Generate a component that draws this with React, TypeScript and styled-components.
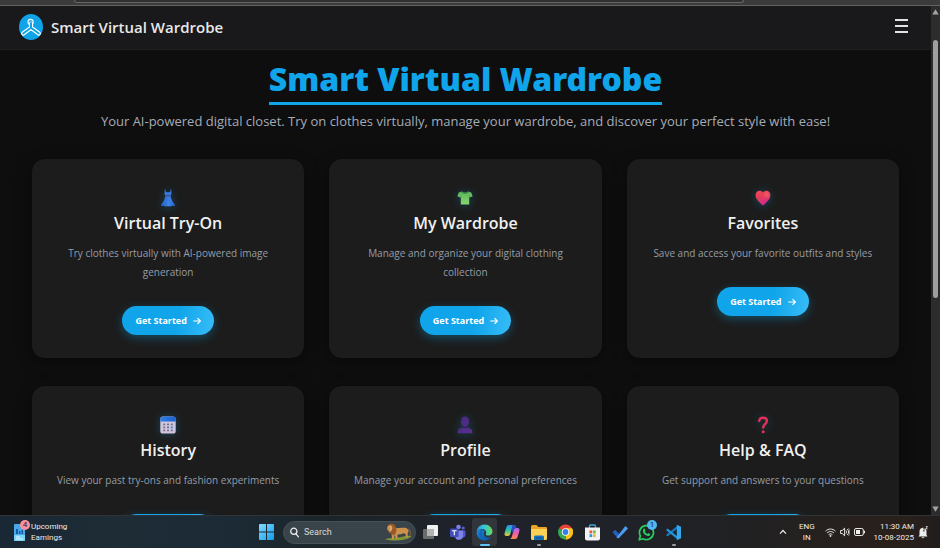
import React from "react";
import styled, { createGlobalStyle } from "styled-components";

const GlobalStyle = createGlobalStyle`
  *, *::before, *::after { box-sizing: border-box; }
  body { margin: 0; background: #0e0e0e; color: #eaeaea; font-family: "Open Sans", "Noto Sans", sans-serif; }
  h1, h2, p { margin: 0; }
  button { border: 0; padding: 0; background: none; color: inherit; font: inherit; cursor: pointer; }
  svg { display: block; flex: none; }
`;

const Desktop = styled.div`
  display: flex;
  flex-direction: column;
  height: 100vh;
  overflow: hidden;
`;

const BrowserEdge = styled.div`
  flex: none;
  height: 6px;
  padding: 0 196px 0 74px;
  background: #3b3b3b;
  border-bottom: 1px solid #626262;
`;

const AddressBarEdge = styled.div`
  height: 3px;
  background: #303030;
  border: 1px solid #666;
  border-top: 0;
  border-radius: 0 0 6px 6px;
`;

const Viewport = styled.div`
  flex: 1;
  min-height: 0;
  display: flex;
`;

const Page = styled.div`
  flex: 1;
  min-width: 0;
  overflow: hidden;
`;

const Header = styled.header`
  display: flex;
  align-items: center;
  justify-content: space-between;
  height: 44px;
  padding: 0 22px 2px 19px;
  background: #19191b;
  border-bottom: 1px solid #1f1f20;
`;

const Brand = styled.a`
  display: flex;
  align-items: center;
  gap: 8px;
  color: #e8e8e8;
  font-size: 15px;
  line-height: 24px;
  font-weight: 600;
  text-decoration: none;
`;

const MenuButton = styled.button`
  display: flex;
  padding-bottom: 3px;
`;

const Main = styled.main`
  padding: 9px 32px 32px;
`;

const Hero = styled.section`
  display: flex;
  flex-direction: column;
  align-items: center;
  text-align: center;
`;

const Title = styled.h1`
  padding-bottom: 3px;
  border-bottom: 3px solid #10a5ea;
  color: #10a5ea;
  font-family: "Noto Sans", "Open Sans", sans-serif;
  font-size: 32px;
  line-height: 40px;
  font-weight: 900;
`;

const Subtitle = styled.p`
  margin-top: 6px;
  color: #a5acb8;
  font-size: 13px;
  line-height: 20px;
  font-weight: 500;
`;

const CardGrid = styled.section`
  display: grid;
  grid-template-columns: repeat(3, minmax(0, 1fr));
  gap: 28px 25px;
  margin-top: 28px;
`;

const Card = styled.article`
  display: flex;
  flex-direction: column;
  align-items: center;
  padding: 27px 24px 23px;
  border-radius: 13px;
  background: #1c1c1c;
  box-shadow: 0 4px 16px rgba(0, 0, 0, 0.4);
  text-align: center;
`;

const CardIcon = styled.div`
  display: flex;
  align-items: center;
  height: 24px;
  filter: drop-shadow(0 1px 4px rgba(14, 165, 233, 0.3));
`;

const CardTitle = styled.h2`
  color: #f0f0f0;
  font-size: 16px;
  line-height: 26px;
  font-weight: 600;
`;

const CardText = styled.p`
  margin-top: 8px;
  color: #959ca8;
  font-size: 10px;
  line-height: 19px;
`;

const StartButton = styled.button`
  display: flex;
  align-items: center;
  gap: 6px;
  height: 29px;
  margin-top: 24px;
  padding: 0 13px;
  border-radius: 15px;
  background: linear-gradient(100deg, #10a5ea 60%, #38bdf8);
  box-shadow: 0 3px 10px rgba(14, 165, 233, 0.35);
  color: #fff;
  font-size: 9px;
  font-weight: 700;
`;

const ScrollTrack = styled.div`
  flex: none;
  display: flex;
  flex-direction: column;
  align-items: center;
  justify-content: space-between;
  width: 9px;
  padding: 3px 0;
  background: #2c2c2c;
`;

const ScrollLane = styled.div`
  flex: 1;
  padding: 25px 0 5px;
`;

const ScrollThumb = styled.div`
  width: 5px;
  height: 56%;
  border-radius: 3px;
  background: #9f9f9f;
`;

const Taskbar = styled.footer`
  flex: none;
  display: grid;
  grid-template-columns: 1fr auto 1fr;
  align-items: center;
  height: 33px;
  border-top: 1px solid #303335;
  background: linear-gradient(90deg, #1a2734 0%, #1d2c35 12%, #1c2a35 25%, #1b2529 35%, #20222a 50%, #20222a 64%, #202123 78%, #2a201b 96%, #211d1c 100%);
  color: #ececec;
  font-family: Roboto, "Open Sans", sans-serif;
  font-size: 8px;
  line-height: 11px;
`;

const WidgetButton = styled.button`
  justify-self: start;
  display: flex;
  align-items: center;
  gap: 5px;
  padding-left: 13px;
  text-align: left;
`;

const WidgetIcon = styled.span`
  position: relative;
`;

const Badge = styled.span<{ $tone: "pink" | "blue" }>`
  position: absolute;
  top: ${(p) => (p.$tone === "pink" ? "-4px" : "2px")};
  right: ${(p) => (p.$tone === "pink" ? "-4px" : "2px")};
  width: 10px;
  height: 10px;
  border-radius: 50%;
  background: ${(p) => (p.$tone === "pink" ? "#ff8f9d" : "#4fb8f0")};
  color: #17202a;
  font-size: 8px;
  line-height: 10px;
  text-align: center;
`;

const Apps = styled.nav`
  display: flex;
  align-items: center;
  padding-left: 6px;
`;

const SearchBox = styled.label`
  display: flex;
  align-items: center;
  width: 133px;
  height: 23px;
  margin: 0 1px 0 9px;
  padding: 0 3px 0 6px;
  border: 1px solid #465057;
  border-radius: 12px;
  background: #39444a;
`;

const SearchInput = styled.input`
  flex: 1;
  min-width: 0;
  padding: 0 0 0 5px;
  border: 0;
  outline: 0;
  background: none;
  color: #eee;
  font: inherit;
  font-size: 9px;
  &::placeholder { color: #d8dcde; opacity: 1; }
`;

const AppButton = styled.button<{ $state?: "active" | "running" }>`
  position: relative;
  display: flex;
  align-items: center;
  justify-content: center;
  width: 27px;
  height: 28px;
  border-radius: 4px;
  background: ${(p) => (p.$state === "active" ? "#32353a" : "transparent")};
  background-clip: padding-box;
  border: solid transparent;
  border-width: 0 1px;

  &::after {
    content: "";
    position: absolute;
    bottom: 0;
    width: ${(p) => (p.$state === "active" ? "10px" : "4px")};
    height: 2px;
    border-radius: 1px;
    background: ${(p) => (p.$state === "active" ? "#5fc6f5" : p.$state === "running" ? "#9a9ca0" : "transparent")};
  }
`;

const Tray = styled.div`
  justify-self: end;
  display: flex;
  align-items: center;
  padding-right: 12px;
`;

const Language = styled.button`
  margin: 0 10px 0 12px;
  text-align: center;
`;

const Status = styled.button`
  display: flex;
  align-items: center;
  gap: 4px;
`;

const Clock = styled.time`
  margin: 0 4px 0 9px;
  text-align: right;
`;

/* ---- Card icons ---- */

const DressIcon = () => (
  <svg width="16" height="18" viewBox="0 0 16 18" aria-hidden="true">
    <defs>
      <linearGradient id="dress" x1="0" x2="1"><stop stopColor="#245fc4" /><stop offset=".55" stopColor="#3f88ee" /><stop offset="1" stopColor="#2863c9" /></linearGradient>
    </defs>
    <path d="M4.700.5v2.300L4.400 5l1.200 2h4.800l1.200-2-.3-2.200V.500h-.9v2L8 3.500 5.600 2.500v-2z" fill="#3678e0" />
    <path d="M5.500 6.800h5c.6 3.600 2.300 6.400 4.800 9.400l-1.600.8-1.400-.4-1.500.9-1.400-.6-1.400.6-1.400-.6-1.400.6-1.400-.9-1.400.4-1.700-.8c2.500-3 4.200-5.800 4.800-9.400z" fill="url(#dress)" />
    <path d="M5.400 6.200h5.200v1.100H5.400z" fill="#4a3f73" />
    <path d="M6.800 8l-1.500 8M8 8v8M9.200 8l1.500 8" stroke="#1f56b5" strokeWidth=".5" opacity=".5" />
  </svg>
);

const ShirtIcon = () => (
  <svg width="16" height="16" viewBox="0 0 16 16" aria-hidden="true">
    <defs><linearGradient id="shirt" x1="0" y1="0" x2="0" y2="1"><stop stopColor="#5cb75a" /><stop offset="1" stopColor="#86d672" /></linearGradient></defs>
    <path d="M5 1.500L1.800 2.600.4 6.200l2.900 1.300.5-.7v7.700h8.400V6.800l.5.7 2.900-1.300-1.400-3.600L11 1.500c-.8 1.600-5.200 1.600-6 0z" fill="url(#shirt)" />
    <path d="M5 1.500c.8 1.800 5.200 1.800 6 0l.9.300c-1 3-6.800 3-7.800 0z" fill="#3c9350" />
    <path d="M3.800 6.800V4.900M12.200 6.800V4.900" stroke="#3d9a4d" strokeWidth=".6" />
  </svg>
);

const HeartIcon = () => (
  <svg width="16" height="16" viewBox="0 0 16 16" aria-hidden="true">
    <defs>
      <linearGradient id="heart" x1=".2" y1="0" x2=".6" y2="1"><stop stopColor="#ef4757" /><stop offset=".5" stopColor="#e13a5a" /><stop offset="1" stopColor="#c9289e" /></linearGradient>
      <radialGradient id="heartGlow" cx=".76" cy=".28" r=".3"><stop stopColor="#f26a66" stopOpacity=".7" /><stop offset="1" stopColor="#f26a66" stopOpacity="0" /></radialGradient>
    </defs>
    <path d="M8 2.600C6.600.2 3.300.200 1.700 2 .1 3.900.3 6.800 1.700 8.900c1.600 2.500 3.900 4.200 5.500 6.100.5.500 1.100.5 1.600 0 1.600-1.900 3.900-3.600 5.500-6.100 1.400-2.100 1.600-5 0-6.900C12.700.2 9.400.200 8 2.600z" fill="url(#heart)" />
    <path d="M8 2.600C6.600.2 3.300.200 1.700 2 .1 3.900.3 6.800 1.700 8.900c1.600 2.500 3.900 4.200 5.500 6.100.5.500 1.100.5 1.600 0 1.600-1.900 3.900-3.600 5.500-6.100 1.400-2.100 1.600-5 0-6.900C12.700.2 9.400.200 8 2.600z" fill="url(#heartGlow)" />
  </svg>
);

const CalendarIcon = () => (
  <svg width="16" height="18" viewBox="0 0 16 18" aria-hidden="true">
    <defs><linearGradient id="cal" x1="0" x2="1"><stop stopColor="#2f7fe6" /><stop offset="1" stopColor="#1d5fd0" /></linearGradient></defs>
    <rect x=".3" y=".5" width="15.400" height="17" rx="2.600" fill="#cfc6dd" />
    <path d="M.3 5.500V3.100A2.600 2.600 0 0 1 2.900.5h10.200a2.600 2.600 0 0 1 2.600 2.600v2.400z" fill="url(#cal)" />
    {[7.5, 10.5, 13.5].map((y, row) =>
      [3.2, 7, 10.8].map((x, col) => (
        <rect key={`${x}-${y}`} x={x} y={y} width="2" height="1.800" rx=".4" fill={row === 1 && col === 2 ? "#1f8be8" : "#77708c"} />
      )),
    )}
  </svg>
);

const PersonIcon = () => (
  <svg width="16" height="18" viewBox="0 0 16 18" aria-hidden="true">
    <defs><linearGradient id="person" x1="0" y1="0" x2="1" y2="1"><stop stopColor="#45297a" /><stop offset="1" stopColor="#5a2f93" /></linearGradient></defs>
    <path d="M8 .5c-2.500 0-4 1.900-4 4.700 0 2 .8 3.800 2 4.800v1.600l-3.400 1.200C1.200 13.300.6 14.400.5 17.300h15c-.1-2.900-.7-4-2.100-4.500L10 11.600V10c1.200-1 2-2.800 2-4.800C12 2.400 10.500.5 8 .5z" fill="url(#person)" />
    <path d="M6 10c1.200 1 2.800 1 4 0v1.600c-1 1-3 1-4 0z" fill="#321d5e" />
  </svg>
);

const QuestionIcon = () => (
  <svg width="12" height="18" viewBox="0 0 12 18" aria-hidden="true">
    <defs><linearGradient id="question" x1="0" y1="0" x2="0" y2="1"><stop stopColor="#e8356b" /><stop offset="1" stopColor="#e6323f" /></linearGradient></defs>
    <path d="M2.200 4.900C2.500 2.700 4 1.700 6 1.700c2.300 0 3.900 1.200 3.900 3.200C9.900 8 6.200 8 6.200 11.600" fill="none" stroke="#dd3158" strokeWidth="2.500" strokeLinecap="round" />
    <circle cx="6.200" cy="15.700" r="1.500" fill="url(#question)" />
  </svg>
);

const ArrowIcon = () => (
  <svg width="8" height="8" viewBox="0 0 8 8" fill="none" stroke="#fff" strokeWidth="1.200" aria-hidden="true">
    <path d="M.3 4h7M4.500 1.200L7.300 4 4.500 6.800" />
  </svg>
);

const BrandLogo = () => (
  <svg width="24" height="26" viewBox="0 0 24 26" aria-hidden="true">
    <ellipse cx="12" cy="13" rx="12" ry="13" fill="#0fa4e9" />
    <g fill="none" strokeLinecap="round" strokeLinejoin="round">
      <path d="M12 13.800L4.200 19.500M12 13.800l7.800 5.700M12 13.800v-4.100" stroke="#fff" strokeWidth="4.200" />
      <circle cx="11.600" cy="8" r="2.600" stroke="#fff" strokeWidth="1.100" />
      <path d="M12 13.700L4.200 19.500M12 13.700l7.800 5.800M12 13.800V9" stroke="#0fa4e9" strokeWidth="2" />
    </g>
  </svg>
);

/* ---- Taskbar icons ---- */

const NewsIcon = () => (
  <svg width="13" height="17" viewBox="0 0 13 17" aria-hidden="true">
    <rect x="1" width="11" height="17" rx="1" fill="#48a7e8" />
    <path d="M1 11h11v5a1 1 0 0 1-1 1H2a1 1 0 0 1-1-1z" fill="#79d4fa" />
    <path d="M3 10V5h2v5zm3 0V7h1.500v3zm2.500 0V6H10v4z" fill="#155ba4" />
    <path d="M3 13h4M3 15h7" stroke="#e9f9ff" />
  </svg>
);

const WindowsIcon = () => (
  <svg width="15" height="16" viewBox="0 0 15 16" aria-hidden="true">
    <defs><linearGradient id="win" x1="0" y1="0" x2="1" y2="1"><stop stopColor="#83dcff" /><stop offset="1" stopColor="#119cee" /></linearGradient></defs>
    <path d="M0 1a1 1 0 0 1 1-1h6v7.600H0zM8 0h6a1 1 0 0 1 1 1v6.600H8zM0 8.400h7V16H1a1 1 0 0 1-1-1zM8 8.400h7V15a1 1 0 0 1-1 1H8z" fill="url(#win)" />
  </svg>
);

const SearchIcon = () => (
  <svg width="9" height="11" viewBox="0 0 9 11" fill="none" stroke="#e9ecee" strokeWidth="1.300" aria-hidden="true">
    <circle cx="3.800" cy="4.300" r="3.100" /><path d="M6 6.800l2.500 3" strokeLinecap="round" />
  </svg>
);

const LionIcon = () => (
  <svg width="27" height="18" viewBox="0 0 27 18" aria-hidden="true">
    <path d="M0 16c6-1.300 12-1 17-2.200 3-.8 6-1.200 9.500-.8-1.500 2.200-6 3.800-11.500 4.300-5 .4-12 .3-15-1.300z" fill="#7c9636" />
    <path d="M9 4.800c3.500.6 7-.6 11 0 2.500.4 3.700 2 3.500 4.200l-.9 1.600.4 4h-1.800l-.7-3.600-2-.8c-2 1-4 1.300-6 1.200l.2 4.600h-1.900l-1-4.500-1 4.800H7L6.500 10z" fill="#cc914c" />
    <path d="M23 6c2.500 1 2.700 3.500 2 6.500" fill="none" stroke="#a8672c" strokeWidth=".9" />
    <path d="M3 2.200C4.500.2 8 .2 9.800 2c1.800 2 2 5 1.200 7.600-.6 2-2.600 3-4 1.900C5.500 10.300 3.500 9.800 2.800 7.800 2 6 2 3.800 3 2.200z" fill="#98592a" />
    <path d="M2.800 3.600c1.200-1.600 3.700-1.500 4.400.2.600 1.600-.2 3.700-1.600 4.800C4.300 8.800 2.700 8 2.300 6.600z" fill="#dfaa63" />
    <circle cx="4.100" cy="4.900" r=".5" fill="#3a1e0c" /><path d="M2.600 7l1.500.4" stroke="#4a2812" strokeWidth=".8" />
  </svg>
);

const TaskViewIcon = () => (
  <svg width="15" height="16" viewBox="0 0 15 16" aria-hidden="true">
    <rect x="4" y="1" width="11" height="11" rx="1" fill="#f1f1f1" /><rect y="5" width="11" height="10" rx="1" fill="#6b6c6e" />
    <path d="M4 5h7v7H4z" fill="#b3b3b4" />
  </svg>
);

const TeamsIcon = () => (
  <svg width="16" height="16" viewBox="0 0 16 16" aria-hidden="true">
    <circle cx="8.500" cy="3" r="2.300" fill="#7b83eb" /><circle cx="13.200" cy="4" r="1.600" fill="#5560ce" />
    <path d="M11 6.500h4.500V11c0 2-2 3-4 2z" fill="#5059c9" /><path d="M5 6.500h8V11a4 4 0 0 1-8 1.500z" fill="#7b83eb" />
    <rect y="4.500" width="8.500" height="8.500" rx="1" fill="#434cbd" />
    <path d="M2 6.800h4.600M4.300 6.800v4.500" stroke="#fff" strokeWidth="1.100" />
  </svg>
);

const EdgeIcon = () => (
  <svg width="17" height="17" viewBox="0 0 17 17" aria-hidden="true">
    <defs>
      <linearGradient id="edgeTop" x1="0" x2="1"><stop stopColor="#249fe4" /><stop offset=".5" stopColor="#36c9d2" /><stop offset="1" stopColor="#67d84f" /></linearGradient>
      <linearGradient id="edgeSide" x1="0" y1="0" x2="1" y2="1"><stop stopColor="#1a8ae0" /><stop offset="1" stopColor="#0c4f97" /></linearGradient>
    </defs>
    <path d="M.5 8.500a8 8 0 0 0 14.600 4.600c-3.600 1.600-7.100-.1-7.300-3.100-.1-1.200.4-2 1-2.800C6 4 1.500 5.500.5 8.500z" fill="url(#edgeSide)" />
    <path d="M.5 8.500A8 8 0 0 1 8.500.5c4.600 0 8 3.400 8 7 0 2.600-2 4-4.200 4-1.800 0-3-.7-2.400-1.500 1-1.600-.1-4.500-3.200-4.900C3.800 4.700 1.200 6 .5 8.500z" fill="url(#edgeTop)" />
    <path d="M3.300 9.200c.3-2 1.500-3.700 3.600-4.100-2.100 2.700-1.700 8.600 3 9.900-3.500 1-7-2-6.600-5.800z" fill="#1565b6" />
  </svg>
);

const CopilotIcon = () => (
  <svg width="16" height="16" viewBox="0 0 16 16" aria-hidden="true">
    <defs>
      <linearGradient id="copL" x1="0" y1="0" x2="0" y2="1"><stop stopColor="#2c8df5" /><stop offset=".5" stopColor="#32c3a0" /><stop offset="1" stopColor="#f2c63a" /></linearGradient>
      <linearGradient id="copR" x1="0" y1="0" x2="0" y2="1"><stop stopColor="#a76bf2" /><stop offset=".5" stopColor="#ef5fa8" /><stop offset="1" stopColor="#fb8b4b" /></linearGradient>
    </defs>
    <path d="M5 1h5.500c-1.700 0-2 1.400-2.500 3L6.500 9.500c-.5 1.800-1 2.500-2.800 2.500H2.500C.6 12 .2 10.500.7 8.700L2.300 3.500C2.800 1.800 3.500 1 5 1z" fill="url(#copL)" />
    <path d="M11 15H5.500c1.700 0 2-1.400 2.500-3l1.500-5.500C10 4.700 10.500 4 12.300 4h1.200c1.900 0 2.300 1.500 1.800 3.300l-1.600 5.200c-.5 1.700-1.200 2.500-2.700 2.500z" fill="url(#copR)" />
    <path d="M8.500 1h2c1.200 0 1.600 1 2 3-2 0-2.500.7-3 2.500L9 8.200 7.200 7 8 4z" fill="#274fc4" />
  </svg>
);

const FolderIcon = () => (
  <svg width="16" height="15" viewBox="0 0 16 15" aria-hidden="true">
    <path d="M0 1.500A1.500 1.500 0 0 1 1.500 0h4L7.300 2H15a1 1 0 0 1 1 1v3H0z" fill="#e8a524" />
    <path d="M0 4h16v9.500A1.500 1.500 0 0 1 14.500 15h-13A1.500 1.500 0 0 1 0 13.500z" fill="#fdd155" />
    <path d="M3 15v-3a1.500 1.500 0 0 1 1.500-1.500h7A1.500 1.500 0 0 1 13 12v3z" fill="#1671bb" /><path d="M5 13h6" stroke="#0d4c8d" />
  </svg>
);

const ChromeIcon = () => (
  <svg width="15" height="16" viewBox="0 0 16 16" aria-hidden="true">
    <path d="M8 8L1.100 4A8 8 0 0 1 14.900 4z" fill="#e94335" /><path d="M8 8l6.900-4A8 8 0 0 1 8 16z" fill="#fbc116" /><path d="M8 8v8A8 8 0 0 1 1.100 4z" fill="#32a852" />
    <path d="M8 4h6.900A8 8 0 0 1 8 16l3.500-6z" fill="#fbc116" /><circle cx="8" cy="8" r="4" fill="#fff" /><circle cx="8" cy="8" r="3.100" fill="#3b7de8" />
  </svg>
);

const StoreIcon = () => (
  <svg width="15" height="17" viewBox="0 0 15 17" aria-hidden="true">
    <path d="M4.500 4V2a1 1 0 0 1 1-1h4a1 1 0 0 1 1 1v2" fill="none" stroke="#38a9df" strokeWidth="1.300" />
    <path d="M0 3.500h15v11a2 2 0 0 1-2 2H2a2 2 0 0 1-2-2z" fill="#f0f2f4" />
    <path d="M4.500 6.500h2.700v2.900H4.500z" fill="#ed5a35" /><path d="M8 6.500h2.700v2.900H8z" fill="#7db932" /><path d="M4.500 10.200h2.700v2.900H4.500z" fill="#1d9ee3" /><path d="M8 10.200h2.700v2.900H8z" fill="#f8b51e" />
  </svg>
);

const TodoIcon = () => (
  <svg width="16" height="14" viewBox="0 0 16 14" aria-hidden="true">
    <path d="M.5 7.200L3 4.800l5 5L5.600 13z" fill="#2460be" /><path d="M5.600 13a.8.800 0 0 1-1-.8L13 1.600a.8.800 0 0 1 1.100 0L15.600 3a.8.800 0 0 1 0 1L7 13a1 1 0 0 1-1.400 0z" fill="#4a9bf0" />
  </svg>
);

const WhatsAppIcon = () => (
  <svg width="17" height="17" viewBox="0 0 17 17" aria-hidden="true">
    <path d="M1.200 15.800l1.100-3.900A7 7 0 1 1 5 14.700z" fill="none" stroke="#27cf63" strokeWidth="1.700" strokeLinejoin="round" />
    <path d="M5.800 4.800c.6-.4 1-.2 1.200.4l.5 1.300-.8 1c.6 1.200 1.500 2 2.700 2.600l.9-1 1.700.8c.4.3.1 1.500-.7 1.900-1.400.8-3.900-.4-5.300-2C4.700 8.300 4.400 6 5.800 4.800z" fill="#27cf63" />
  </svg>
);

const CodeIcon = () => (
  <svg width="15" height="17" viewBox="0 0 15 17" fill="none" aria-hidden="true">
    <path d="M11.500 3.200L1.500 11.200" stroke="#1679c0" strokeWidth="2.200" strokeLinecap="round" />
    <path d="M1.500 5.800l10 8" stroke="#1f96e0" strokeWidth="2.200" strokeLinecap="round" />
    <path d="M10.800.8L15 2.700v11.600l-4.200 1.900z" fill="#30a9ee" />
  </svg>
);

const ChevronIcon = () => (
  <svg width="8" height="6" viewBox="0 0 8 6" fill="none" stroke="#e9e9e9" strokeWidth="1.200" aria-hidden="true"><path d="M1 4.700l3-3.200 3 3.200" /></svg>
);

const WifiIcon = () => (
  <svg width="11" height="9" viewBox="0 0 11 9" fill="none" stroke="#e9e9e9" strokeWidth="1" aria-hidden="true">
    <path d="M.5 3.200c3-2.900 7-2.900 10 0M2 5c2.200-2 4.800-2 7 0M3.600 6.600c1.300-1 2.500-1 3.800 0" /><circle cx="5.500" cy="7.900" r=".6" fill="#e9e9e9" />
  </svg>
);

const VolumeIcon = () => (
  <svg width="10" height="10" viewBox="0 0 10 10" fill="none" stroke="#e9e9e9" strokeWidth="1" aria-hidden="true">
    <path d="M.6 3.500h1.600L4.600 1.200v7.600L2.200 6.500H.6zM6 3.500c.8.8.8 2.200 0 3M7.300 2c1.700 1.600 1.700 4.400 0 6" /><path d="M8.500 1c1.600 2.300 1.600 5.700 0 8" opacity=".5" />
  </svg>
);

const BatteryIcon = () => (
  <svg width="11" height="8" viewBox="0 0 11 8" aria-hidden="true">
    <rect x=".5" y=".5" width="8.800" height="7" rx="1.500" fill="none" stroke="#e9e9e9" /><path d="M2 2h4v4H2zM10 2.800h1v2.400h-1z" fill="#f1f1f1" />
  </svg>
);

const BellIcon = () => (
  <svg width="10" height="13" viewBox="0 0 10 13" aria-hidden="true">
    <path d="M1.500 9V5.200C1.500 3 3 1.700 5 1.700S8.500 3 8.500 5.200V9L9.500 10.500H.5z" fill="#ededed" /><path d="M3.500 11.200h3c-.5 1.500-2.500 1.500-3 0z" fill="#ededed" />
    <path d="M5 2.500h2L5 5h2M7.500.5H9.500L7.500 3h2" fill="none" stroke="#3a302c" strokeWidth=".7" /><path d="M7.800.6h1.700L7.800 2.800h1.700" fill="none" stroke="#ededed" strokeWidth=".8" />
  </svg>
);

const Triangle = ({ down = false }: { down?: boolean }) => (
  <svg width="7" height="6" viewBox="0 0 7 6" fill="#a4a4a4" aria-hidden="true">
    <path d={down ? "M.3.500h6.400L3.500 5.700z" : "M.3 5.500h6.400L3.500.3z"} />
  </svg>
);

const cards = [
  { title: "Virtual Try-On", text: "Try clothes virtually with AI-powered image generation", Icon: DressIcon },
  { title: "My Wardrobe", text: "Manage and organize your digital clothing collection", Icon: ShirtIcon },
  { title: "Favorites", text: "Save and access your favorite outfits and styles", Icon: HeartIcon },
  { title: "History", text: "View your past try-ons and fashion experiments", Icon: CalendarIcon },
  { title: "Profile", text: "Manage your account and personal preferences", Icon: PersonIcon },
  { title: "Help & FAQ", text: "Get support and answers to your questions", Icon: QuestionIcon },
];

const apps: { name: string; Icon: React.FC; state?: "active" | "running"; badge?: string }[] = [
  { name: "Task view", Icon: TaskViewIcon },
  { name: "Teams", Icon: TeamsIcon },
  { name: "Edge", Icon: EdgeIcon, state: "active" },
  { name: "Copilot", Icon: CopilotIcon },
  { name: "File Explorer", Icon: FolderIcon, state: "running" },
  { name: "Chrome", Icon: ChromeIcon },
  { name: "Microsoft Store", Icon: StoreIcon },
  { name: "To Do", Icon: TodoIcon },
  { name: "WhatsApp", Icon: WhatsAppIcon, badge: "1" },
  { name: "Visual Studio Code", Icon: CodeIcon, state: "running" },
];

export default function App() {
  return (
    <Desktop>
      <GlobalStyle />
      <BrowserEdge><AddressBarEdge /></BrowserEdge>
      <Viewport>
        <Page>
          <Header>
            <Brand href="#home"><BrandLogo />Smart Virtual Wardrobe</Brand>
            <MenuButton aria-label="Menu">
              <svg width="15" height="15" viewBox="0 0 15 15" stroke="#e2e2e2" strokeWidth="2" aria-hidden="true">
                <path d="M1 2h13M1 8h13M1 14h13" />
              </svg>
            </MenuButton>
          </Header>
          <Main>
            <Hero>
              <Title>Smart Virtual Wardrobe</Title>
              <Subtitle>Your AI-powered digital closet. Try on clothes virtually, manage your wardrobe, and discover your perfect style with ease!</Subtitle>
            </Hero>
            <CardGrid>
              {cards.map(({ title, text, Icon }) => (
                <Card key={title}>
                  <CardIcon><Icon /></CardIcon>
                  <CardTitle>{title}</CardTitle>
                  <CardText>{text}</CardText>
                  <StartButton>Get Started<ArrowIcon /></StartButton>
                </Card>
              ))}
            </CardGrid>
          </Main>
        </Page>
        <ScrollTrack aria-hidden="true">
          <Triangle />
          <ScrollLane><ScrollThumb /></ScrollLane>
          <Triangle down />
        </ScrollTrack>
      </Viewport>
      <Taskbar>
        <WidgetButton>
          <WidgetIcon><NewsIcon /><Badge $tone="pink">4</Badge></WidgetIcon>
          <span>Upcoming<br />Earnings</span>
        </WidgetButton>
        <Apps aria-label="Taskbar">
          <button aria-label="Start"><WindowsIcon /></button>
          <SearchBox>
            <SearchIcon />
            <SearchInput type="search" placeholder="Search" aria-label="Search" />
            <LionIcon />
          </SearchBox>
          {apps.map(({ name, Icon, state, badge }) => (
            <AppButton key={name} aria-label={name} $state={state}>
              <Icon />
              {badge && <Badge $tone="blue">{badge}</Badge>}
            </AppButton>
          ))}
        </Apps>
        <Tray>
          <button aria-label="Show hidden icons"><ChevronIcon /></button>
          <Language>ENG<br />IN</Language>
          <Status aria-label="Network, volume and battery"><WifiIcon /><VolumeIcon /><BatteryIcon /></Status>
          <Clock>11:30 AM<br />10-08-2025</Clock>
          <button aria-label="Notifications"><BellIcon /></button>
        </Tray>
      </Taskbar>
    </Desktop>
  );
}
